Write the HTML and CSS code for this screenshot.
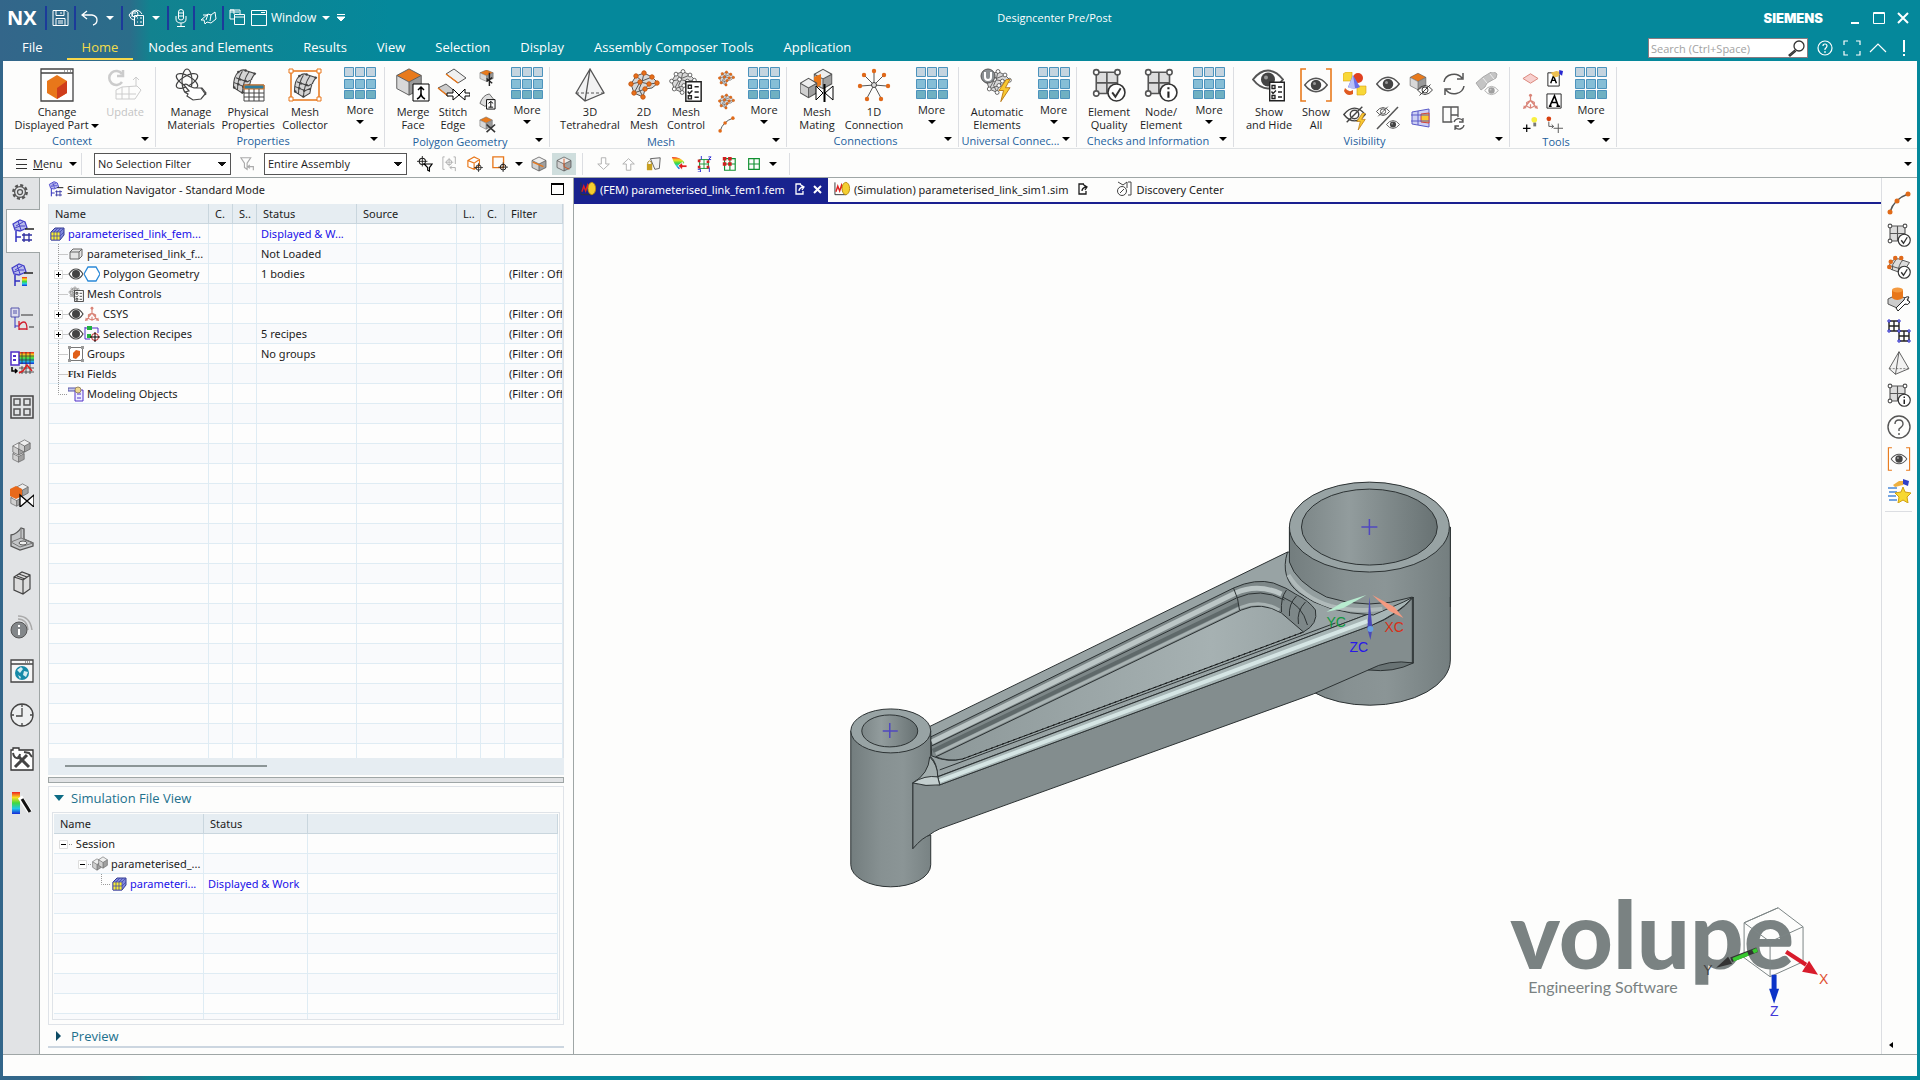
FILE: index.html
```
<!DOCTYPE html>
<html lang="en">
<head>
    <meta charset="utf-8">
    <title>Designcenter Pre/Post</title>
    <link rel="stylesheet" href="styles.css">
</head>
<body>
<svg class="sprite" aria-hidden="true">
    <defs>
        <linearGradient id="rainbow" x1="0" y1="0" x2="0" y2="1">
            <stop offset="0" stop-color="#f02020"/><stop offset=".25" stop-color="#f8e020"/><stop offset=".5" stop-color="#40d840"/><stop offset=".75" stop-color="#20c8e8"/><stop offset="1" stop-color="#1828d8"/>
        </linearGradient>
        <symbol id="down" viewBox="0 0 8 4"><path d="M0 0h8L4 4z" fill="currentColor"/></symbol>
        <symbol id="more" viewBox="0 0 32 32">
            <g stroke="#4c93bd"><path fill="#c4d4df" d="M.5.5h9v9h-9zM11.500.5h9v9h-9zM22.500.5h9v9h-9z"/><path fill="#86bed6" d="M.5 12.500h9v9h-9zM11.500 12.500h9v9h-9zM22.500 12.500h9v9h-9z"/><path fill="#6fb0c2" d="M.5 23.500h9v8h-9zM11.500 23.500h9v8h-9zM22.500 23.500h9v8h-9z"/></g>
        </symbol>
        <symbol id="eye" viewBox="0 0 32 24"><path d="M1 12Q8 3 16 3t15 9q-7 9-15 9T1 12z" fill="#fff" stroke="#555" stroke-width="2"/><circle cx="16" cy="12" r="7" fill="#444" stroke="none"/><circle cx="14" cy="10" r="2" fill="#999" stroke="none"/></symbol>
        <symbol id="tree-eye" viewBox="0 0 16 16"><path d="M1 8q3-5 7-5t7 5q-3 5-7 5T1 8z" fill="#fff" stroke="#444" stroke-width="1.200"/><circle cx="8" cy="8" r="4" fill="#444"/></symbol>
        <symbol id="slash-eye" viewBox="0 0 32 24"><path d="M1 12Q8 3 16 3t15 9q-7 9-15 9T1 12z" fill="none" stroke="#444" stroke-width="2"/><circle cx="16" cy="12" r="6" fill="none" stroke="#444" stroke-width="2"/><path d="M5 23L27 1" stroke="#444" stroke-width="2"/></symbol>
        <symbol id="bolt" viewBox="0 0 14 24"><path d="M9 0L1 12h5L3 24l10-15H8l5-9z" fill="#f8c830" stroke="#b87818"/></symbol>
        <symbol id="cube" viewBox="0 0 32 32" preserveAspectRatio="none"><path d="M2 9L16 2l14 7-14 7z" fill="#e87a1c"/><path d="M2 9v14l14 7V16z" fill="#d8d8d8"/><path d="M30 9v14l-14 7V16z" fill="#9a9a9a"/><path d="M2 9L16 2l14 7v14l-14 7-14-7zM2 9l14 7 14-7M16 16v14" fill="none" stroke="#555"/></symbol>
        <symbol id="cube-grey" viewBox="0 0 32 32" preserveAspectRatio="none"><path d="M2 9L16 2l14 7-14 7z" fill="#eee"/><path d="M2 9v14l14 7V16z" fill="#d0d0d0"/><path d="M30 9v14l-14 7V16z" fill="#a0a0a0"/><path d="M2 9L16 2l14 7v14l-14 7-14-7zM2 9l14 7 14-7M16 16v14" fill="none" stroke="#555" stroke-width="1.500"/></symbol>
        <symbol id="patch" viewBox="0 0 32 32">
            <path d="M9 5q5-4 9-2l12 4q-6 5-8 19l-8 5L3 24q0-14 6-19z" fill="#d4d4d4"/><path d="M9 5q5-4 9-2l12 4q-6 5-8 19l-8 5L3 24q0-14 6-19zM14 4q-6 9-6 23M22 5q-7 10-8 26M6 12l14 5 6-3M4 18l12 5 7-3" fill="none" stroke="#444" stroke-width="1.300"/>
            <g fill="#444" stroke="none"><circle cx="9" cy="5" r="1.500"/><circle cx="18" cy="3" r="1.500"/><circle cx="29" cy="7" r="1.500"/><circle cx="11" cy="14" r="1.500"/><circle cx="18" cy="16" r="1.500"/><circle cx="9" cy="20" r="1.500"/><circle cx="15" cy="23" r="1.500"/><circle cx="4" cy="24" r="1.500"/><circle cx="14" cy="30" r="1.500"/></g>
        </symbol>
        <symbol id="mesh" viewBox="0 0 32 32">
            <path d="M3 15l5-8 8-3 8 4 6 6-6 5-7 1-2 8-9-4z" fill="#d8d8d8" stroke="#555"/><path d="M3 15l9-2 9 2 9-1M8 7l6 5 10-4M16 4l-2 9-3 7 4 8M21 15l-4 5-11 4M12 13l-6 11" fill="none" stroke="#555"/>
            <g><circle cx="3" cy="15" r="2.200"/><circle cx="8" cy="7" r="2.200"/><circle cx="16" cy="4" r="2.200"/><circle cx="24" cy="8" r="2.200"/><circle cx="29" cy="14" r="2.200"/><circle cx="21" cy="15" r="2.200"/><circle cx="12" cy="13" r="2.200"/><circle cx="17" cy="20" r="2.200"/><circle cx="6" cy="24" r="2.200"/><circle cx="15" cy="28" r="2.200"/></g>
        </symbol>
        <symbol id="list" viewBox="0 0 16 20"><path d="M.7.7h14.600v18.600H.7z" fill="#fff" stroke="#222" stroke-width="1.400"/><path d="M3 4h3v3H3zM3 14h3v3H3zM2.500 10l1.500 2 3-3M9 5.500h4M9 10.500h4M9 15.500h4" fill="none" stroke="#222" stroke-width="1.300"/></symbol>
        <symbol id="grid4" viewBox="0 0 32 32">
            <path d="M4 4h20v20H4z" fill="#ddd" stroke="#555" stroke-width="1.500"/><path d="M14 4v20M4 14h20" stroke="#555" stroke-width="1.500"/>
            <g fill="#fff" stroke="#555" stroke-width="1.500"><circle cx="4" cy="4" r="2.500"/><circle cx="24" cy="4" r="2.500"/><circle cx="4" cy="24" r="2.500"/></g>
            <circle cx="23" cy="23" r="8" fill="#fff" stroke="#333" stroke-width="1.500"/>
        </symbol>
        <symbol id="quality" viewBox="0 0 32 32"><use href="#grid4"/><path d="M19 23l3 4 5-8" fill="none" stroke="#333" stroke-width="1.800"/></symbol>
        <symbol id="node-info" viewBox="0 0 32 32"><use href="#grid4"/><path d="M23 22v6M23 18v2" stroke="#222" stroke-width="2"/></symbol>
        <symbol id="tet" viewBox="0 0 32 34"><path d="M16 1L2 25l9 8 19-8zM16 1l-5 32" fill="#f2f2f2" stroke="#555" stroke-width="1.300"/><path d="M2 25h28" stroke="#555" stroke-dasharray="3 2"/></symbol>
        <symbol id="show-all" viewBox="0 0 32 34"><path d="M6 1H1v32h5M26 1h5v32h-5" fill="none" stroke="#e87a1c" stroke-width="1.600"/><use href="#eye" x="4" y="7" width="24" height="20"/></symbol>
        <symbol id="curve" viewBox="0 0 24 24"><path d="M3 21Q7 8 21 3" fill="none" stroke="#555" stroke-width="1.400"/><g fill="#e06a18"><circle cx="3" cy="21" r="2.500"/><circle cx="10" cy="10" r="2.500"/><circle cx="21" cy="3" r="2.500"/></g></symbol>
        <symbol id="csys" viewBox="0 0 18 18"><g fill="none" stroke="#d98478" stroke-width="1.300"><path d="M9 2v6L3 15M9 8l6 7M5 10l4-2 4 2v4l-4 2-4-2zM9 12v4"/></g><circle cx="9" cy="2.500" r="1.600" fill="#d98478"/><path d="M1 17l1-4 3 3zM17 17l-1-4-3 3z" fill="#d98478"/></symbol>
        <symbol id="fem" viewBox="0 0 16 16"><path d="M2 6l4-4h9v7l-4 5H2z" fill="#8088dc" stroke="#333a90"/><path d="M2 6h9v8H2z" fill="#f8ee30"/><path d="M2 6h9v8H2zM5 6v8M8 6v8M2 10h9M11 6l4-4M5 6l4-4M8 6l4-4M11 10l4-4" fill="none" stroke="#4448a8" stroke-width=".8"/></symbol>
        <symbol id="branch" viewBox="0 0 19 20"><path d="M9.500 0v20M9.500 10.500H19" fill="none" stroke="#999" stroke-dasharray="1 1"/></symbol>
        <symbol id="branch-end" viewBox="0 0 19 20"><path d="M9.500 0v10.500H19" fill="none" stroke="#999" stroke-dasharray="1 1"/></symbol>
        <symbol id="branch-plus" viewBox="0 0 19 20"><use href="#branch"/><path d="M5.500 6.500h8v8h-8z" fill="#fff" stroke="#ddd"/><path d="M7 10.500h5M9.500 8v5" stroke="#000"/></symbol>
        <symbol id="branch-minus" viewBox="0 0 19 20"><path d="M13 10.500h6" stroke="#999" stroke-dasharray="1 1"/><path d="M5.500 6.500h8v8h-8z" fill="#fff" stroke="#ddd"/><path d="M7 10.500h5" stroke="#000"/></symbol>
        <symbol id="page" viewBox="0 0 10 12"><path d="M6 1H1v10h7V8M5 1l3 3M4 8q0-3 4-4M6 2l3 2-2 3" fill="none" stroke="currentColor" stroke-width="1.300"/></symbol>
        <symbol id="sim" viewBox="0 0 18 16"><path d="M1 1v13h12" fill="none" stroke="#333"/><path d="M2 11l2-6 2 5 2-6 2 7" fill="none" stroke="#e02020" stroke-width="1.500"/><ellipse cx="12.500" cy="7.500" rx="4" ry="6.500" fill="#f4cf30" stroke="#b98a10"/></symbol>
        <symbol id="nav-mesh" viewBox="0 0 24 24"><path d="M2 5l7-4 5 2 2 6-7 3-5-1z" fill="#b9bcec" stroke="#4440c8" stroke-width="1.300"/><path d="M5 7l7-4M4 9q5-3 10-2M7 2l3 9" fill="none" stroke="#4440c8"/><path d="M14 10h9" stroke="#222" stroke-width="1.500"/><path d="M5 12v11M5 18h5" stroke="#3030c0" stroke-width="1.500" fill="none"/></symbol>
        <symbol id="target" viewBox="0 0 12 12"><circle cx="6" cy="6" r="3.500" fill="none" stroke="currentColor" stroke-width="1.200"/><path d="M6 0v12M0 6h12" stroke="currentColor"/></symbol>
    </defs>
</svg>

<header class="titlebar">
    <div class="quick">
        <span class="nx">NX</span><i class="vsep"></i>
        <button class="qa" aria-label="Save"><svg width="17" height="18" viewBox="0 0 17 18" fill="none" stroke="#fff"><path d="M1 1.500h13l2 2v13H1zM4 1.500v5h8v-5M9 3v2M4 16.500v-7h9v7M6 12h5M6 14h5"/></svg></button><i class="vsep"></i>
        <button class="qa" aria-label="Undo"><svg width="18" height="16" viewBox="0 0 18 16" fill="none" stroke="#fff" stroke-width="1.300"><path d="M6 1L1 5l5 4M1 5h10q5 1 5 5t-4 5"/></svg></button>
        <svg class="arrow"><use href="#down"/></svg><i class="vsep"></i>
        <button class="qa" aria-label="Reset"><svg width="17" height="18" viewBox="0 0 17 18" fill="none" stroke="#fff"><path d="M1 6q3-5 7-5t6 4M1 6q2 5 5 5M4 8V4h4M6.500 6.500h9v10h-9zM9 9h1M9 13h1M12 9h2M12 13h2"/><circle cx="7" cy="5" r="3"/></svg></button>
        <svg class="arrow"><use href="#down"/></svg><i class="vsep"></i>
        <button class="qa" aria-label="Voice"><svg width="14" height="18" viewBox="0 0 14 18" fill="none" stroke="#fff"><path d="M4.500 3q0-2.500 2.500-2.500T9.500 3v6q0 2-2.500 2T4.500 9zM2 7v3q0 4 5 4t5-4V7M7 14v3M3 17.500h8M5 4h4M5 7h4"/></svg></button><i class="vsep"></i>
        <button class="qa" aria-label="Touch"><svg width="17" height="14" viewBox="0 0 17 14" fill="none" stroke="#fff"><path d="M1 9l7-6 3 1 4-3 1 7-5 4-4-1-2 2-1-4zM8 3l-2 6M11 4l-1 6M3 4h4"/></svg></button><i class="vsep"></i>
        <button class="qa" aria-label="Cascade"><svg width="17" height="17" viewBox="0 0 17 17" fill="none" stroke="#fff"><path d="M5 5V1H1v9h4M1 1h10v4M1 3h9M5.500 5.500h10v10h-10zM5.500 8h10"/></svg></button>
        <button class="qa win"><svg width="16" height="16" viewBox="0 0 16 16" fill="none" stroke="#fff"><path d="M.5.5h15v15H.5zM.5 4.500h15M10 2.500h4"/></svg>Window<svg class="arrow"><use href="#down"/></svg></button>
        <svg width="8" height="8" viewBox="0 0 8 8"><path d="M0 .5h8M0 3h8L4 7z" fill="#fff" stroke="#fff"/></svg>
    </div>
    <h1>Designcenter Pre/Post</h1>
    <div class="winctl">
        <b>SIEMENS</b>
        <button aria-label="Minimize"><svg width="12" height="12" viewBox="0 0 12 12"><path d="M2 11h8" stroke="#fff" stroke-width="2"/></svg></button>
        <button aria-label="Maximize"><svg width="12" height="12" viewBox="0 0 12 12"><path d="M.5.5h11v11H.5zM.5 1.500h11" fill="none" stroke="#fff"/></svg></button>
        <button aria-label="Close"><svg width="12" height="12" viewBox="0 0 12 12"><path d="M1 1l10 10M11 1L1 11" stroke="#fff" stroke-width="2"/></svg></button>
    </div>
</header>

<nav class="menubar">
    <a class="file" href="#">File</a>
    <a class="active" href="#">Home</a>
    <a href="#">Nodes and Elements</a>
    <a href="#">Results</a>
    <a href="#">View</a>
    <a href="#">Selection</a>
    <a href="#">Display</a>
    <a href="#">Assembly Composer Tools</a>
    <a href="#">Application</a>
    <div class="search">
        <input type="text" placeholder="Search (Ctrl+Space)" aria-label="Search">
        <svg width="17" height="17" viewBox="0 0 17 17" fill="none" stroke="#333"><circle cx="11" cy="6" r="5" stroke-width="1.300"/><path d="M7 10l-6 5 1 1 6-5" stroke-width="1.300"/></svg>
    </div>
    <svg width="92" height="18" viewBox="0 0 92 18" fill="none" stroke="#fff" stroke-width="1.200">
        <circle cx="8" cy="9" r="7"/><path d="M6 7q0-2 2-2t2 2q0 1-2 3v1M8 12v2"/>
        <path d="M27 6V2h4M39 2h4v4M43 12v4h-4M31 16h-4v-4M53 13l8-8 8 8"/><path d="M87 1v12M87 15v2" stroke-width="2"/>
    </svg>
</nav>

<div class="shell">
<div class="ribbon">
    <section class="group g1">
        <div class="tools">
            <button class="big w100"><svg viewBox="0 0 34 34"><path d="M1 1h32v32H1zM1 5h32" fill="#fff" stroke="#444" stroke-width="1.300"/><path d="M24 3h7" stroke="#444" stroke-dasharray="1 2"/><path d="M17 7l10 6v12l-10 6-10-6V13z" fill="#e8771a"/><path d="M17 20l10-7v12l-10 6z" fill="#cf3d1c"/></svg><span>Change<br>Displayed Part <svg class="arrow"><use href="#down"/></svg></span></button>
            <button class="big w36" disabled><svg viewBox="0 0 34 34" fill="none" stroke="#ccc"><path d="M14 6a7 7 0 1 0 0 8M15 2v6h-6" stroke-width="2.500"/><path d="M8 22l6-3 15-1 4 4-6 9H8zM8 26h20M14 19v12M21 19v12M28 18V9l-3 3M28 9l3 3"/></svg><span>Update</span></button>
        </div>
        <h2>Context<svg class="arrow"><use href="#down"/></svg></h2>
    </section>
    <section class="group g2">
        <div class="tools">
            <button class="big w62"><svg viewBox="0 0 34 34" fill="none" stroke="#444" stroke-width="1.200"><ellipse cx="13" cy="13" rx="12" ry="5" transform="rotate(30 13 13)"/><ellipse cx="13" cy="13" rx="12" ry="5" transform="rotate(-30 13 13)"/><ellipse cx="13" cy="13" rx="5" ry="12"/><path d="M10 17q2-2 5 1l5 2 8 0 4 5-5 6-8 1-6-4 1-2-3-2 4-1z" fill="#fff"/><path d="M27 20l5 7"/></svg><span>Manage<br>Materials</span></button>
            <button class="big w52"><svg viewBox="0 0 34 34"><use href="#patch" width="26" height="26"/><path d="M13 17h20v16H13z" fill="#fff" stroke="#444"/><path d="M13 17h20v4H13z" fill="#2e7ea0" stroke="#e8771a"/><path d="M18 21v12M23 21v12M28 21v12M13 25h20M13 29h20" stroke="#444"/></svg><span>Physical<br>Properties</span></button>
            <button class="big w62"><svg viewBox="0 0 34 34"><path d="M3 3h28v29H3z" fill="none" stroke="#e8771a" stroke-width="1.500"/><path d="M1 1h4v4H1zM29 1h4v4h-4zM1 29h4v4H1zM29 29h4v4h-4z" fill="#fff" stroke="#e8771a"/><use href="#patch" x="4" y="3" width="26" height="28"/></svg><span>Mesh<br>Collector</span></button>
            <button class="more"><svg class="nine"><use href="#more"/></svg>More<svg class="arrow"><use href="#down"/></svg></button>
        </div>
        <h2>Properties<svg class="arrow"><use href="#down"/></svg></h2>
    </section>
    <section class="group g3">
        <div class="tools">
            <button class="big w48"><svg viewBox="0 0 34 34"><use href="#cube" x="-1" y="-1" width="28" height="30"/><path d="M17 16h16v17H17z" fill="#fff" stroke="#000"/><path d="M25 19v6q0 4-4 6M25 25q0 4 4 6M22 22l3-3 3 3" fill="none" stroke="#000" stroke-width="1.500"/></svg><span>Merge<br>Face</span></button>
            <button class="big w32"><svg viewBox="0 0 34 34"><path d="M10 6l8-5 12 9-8 5z" fill="#f0f0f0" stroke="#555"/><path d="M2 20l8-4 10 8-8 4z" fill="#ccc" stroke="#555"/><path d="M10 6l12 9M2 20l10 8" stroke="#e8771a" stroke-width="1.500"/><path d="M11 25h6v-4l6 6-6 5v-4h-6zM34 25h-5v-4l-6 6 6 5v-4h5z" fill="#fff" stroke="#000"/></svg><span>Stitch<br>Edge</span></button>
            <div class="smallcol w36">
                <button aria-label="Split Face"><svg viewBox="0 0 18 18"><use href="#cube" y="-1" width="16" height="14"/><path d="M11 3v14M8 12l6-4M8 9l6 5" stroke="#222" stroke-width="1.500"/></svg></button>
                <button aria-label="Heal"><svg viewBox="0 0 18 18"><path d="M1 11Q4 2 11 1l4 5v6l-9 2z" fill="#ddd" stroke="#666"/><path d="M8 7h9v10H8z" fill="#fff" stroke="#000"/><path d="M12.500 9v6M10 11l2.500-2 2.500 2M10 15h5" stroke="#000" fill="none"/></svg></button>
                <button aria-label="Remove Face"><svg viewBox="0 0 18 18"><use href="#cube" width="15" height="15"/><path d="M8 9l9 8M17 9l-9 8" stroke="#333" stroke-width="1.700"/></svg></button>
            </div>
            <button class="more"><svg class="nine"><use href="#more"/></svg>More<svg class="arrow"><use href="#down"/></svg></button>
        </div>
        <h2>Polygon Geometry<svg class="arrow"><use href="#down"/></svg></h2>
    </section>
    <section class="group g4">
        <div class="tools">
            <button class="big w72"><svg><use href="#tet"/></svg><span>3D<br>Tetrahedral</span></button>
            <button class="big w36"><svg class="odots" viewBox="0 0 34 34"><use href="#mesh" y="1" width="34" height="32"/></svg><span>2D<br>Mesh</span></button>
            <button class="big w48"><svg class="wdots" viewBox="0 0 34 34"><use href="#mesh" width="28" height="28"/><use href="#list" x="16" y="13" width="17" height="21"/></svg><span>Mesh<br>Control</span></button>
            <div class="smallcol w32">
                <button aria-label="3D Swept"><svg class="odots"><use href="#mesh"/></svg></button>
                <button aria-label="2D Mapped"><svg class="odots"><use href="#mesh"/></svg></button>
                <button aria-label="1D Mesh"><svg><use href="#curve"/></svg></button>
            </div>
            <button class="more"><svg class="nine"><use href="#more"/></svg>More<svg class="arrow"><use href="#down"/></svg></button>
        </div>
        <h2>Mesh<svg class="arrow"><use href="#down"/></svg></h2>
    </section>
    <section class="group g5">
        <div class="tools">
            <button class="big w52"><svg viewBox="0 0 34 34"><use href="#cube-grey" x="13" width="20" height="22"/><path d="M14 9l7-3v11l-7 4z" fill="#e8771a"/><use href="#cube-grey" x="-1" y="9" width="19" height="22"/><path d="M16 18l7 7-7 7zM33 18l-8 7 8 7z" fill="#fff" stroke="#000"/><path d="M24.500 16v18" stroke="#000" stroke-width="2"/></svg><span>Mesh<br>Mating</span></button>
            <button class="big w62"><svg viewBox="0 0 34 34"><path d="M17 17V3M17 17l10-10M17 17l13 1M17 17l7 13M17 17l-7 13M17 17L4 18M17 17L7 7" stroke="#555"/><g fill="#e0691a"><circle cx="17" cy="3" r="2.200"/><circle cx="27" cy="7" r="2.200"/><circle cx="31" cy="18" r="2.200"/><circle cx="24" cy="31" r="2.200"/><circle cx="10" cy="31" r="2.200"/><circle cx="3" cy="18" r="2.200"/><circle cx="7" cy="7" r="2.200"/></g><circle cx="17" cy="17" r="2.500" fill="#ddd" stroke="#444"/></svg><span>1D<br>Connection</span></button>
            <button class="more"><svg class="nine"><use href="#more"/></svg>More<svg class="arrow"><use href="#down"/></svg></button>
        </div>
        <h2>Connections<svg class="arrow"><use href="#down"/></svg></h2>
    </section>
    <section class="group g6">
        <div class="tools">
            <button class="big w68"><svg class="wdots" viewBox="0 0 34 34"><use href="#mesh" x="4" width="28" height="28"/><circle cx="8" cy="8" r="7" fill="#8a8f92"/><path d="M5 4v5q0 3 3 3t3-3V4" fill="none" stroke="#fff" stroke-width="2"/><use href="#bolt" x="18" y="11" width="13" height="23"/></svg><span>Automatic<br>Elements</span></button>
            <button class="more"><svg class="nine"><use href="#more"/></svg>More<svg class="arrow"><use href="#down"/></svg></button>
        </div>
        <h2>Universal Connec...<svg class="arrow"><use href="#down"/></svg></h2>
    </section>
    <section class="group g7">
        <div class="tools">
            <button class="big w56"><svg><use href="#quality"/></svg><span>Element<br>Quality</span></button>
            <button class="big w48"><svg><use href="#node-info"/></svg><span>Node/<br>Element</span></button>
            <button class="more"><svg class="nine"><use href="#more"/></svg>More<svg class="arrow"><use href="#down"/></svg></button>
        </div>
        <h2>Checks and Information<svg class="arrow"><use href="#down"/></svg></h2>
    </section>
    <section class="group g8">
        <div class="tools">
            <button class="big w62"><svg viewBox="0 0 34 34"><use href="#eye" y="-1" width="32" height="25"/><use href="#list" x="17" y="13" width="16" height="21"/></svg><span>Show<br>and Hide</span></button>
            <button class="big w32"><svg><use href="#show-all"/></svg><span>Show<br>All</span></button>
            <div class="vis">
                <button aria-label="Edit Display"><svg viewBox="0 0 24 24"><path d="M0 2l3-2h6v7l-2 2H0zM14 16l2-2h7v7l-2 2h-7z" fill="#f8d838" stroke="#d8a010" stroke-width=".6"/><circle cx="15" cy="6" r="5" fill="#e04020"/><path d="M10 3l7 12q-6 3-12 0z" fill="#6a70e8"/><path d="M10 3l2 13H5z" fill="#b8c0f8"/><path d="M2 16q4 5 8 2v4q-6 3-9-3z" fill="#e05a20"/></svg></button>
                <button aria-label="Show"><svg><use href="#eye"/></svg></button>
                <button aria-label="Hide Body"><svg viewBox="0 0 24 24"><use href="#cube" width="18" height="19"/><use href="#slash-eye" x="8" y="12" width="16" height="12"/></svg></button>
                <button aria-label="Invert"><svg viewBox="0 0 24 24" fill="none" stroke="#555" stroke-width="1.500"><path d="M2 10a10 9 0 0 1 18-4M22 14a10 9 0 0 1-18 4M21 1v6h-6M3 23v-6h6"/></svg></button>
                <button aria-label="Spotlight"><svg viewBox="0 0 24 24"><path d="M1 11l5 7 4-3 2-4 9-5 1-4-4-3-10 6z" fill="#c4c4c4" stroke="#aaa"/><path d="M15 2l4 5M8 6l4 5" stroke="#eee"/><use href="#eye" x="9" y="13" width="15" height="11" opacity=".5"/></svg></button>
                <button aria-label="Immediate Hide"><svg viewBox="0 0 24 24"><use href="#slash-eye" width="23" height="17"/><use href="#bolt" x="13" y="7" width="10" height="17"/></svg></button>
                <button aria-label="Toggle"><svg viewBox="0 0 24 24"><use href="#slash-eye" width="14" height="11"/><use href="#eye" x="10" y="13" width="14" height="11"/><path d="M1 23L22 1" stroke="#555" stroke-width="1.500"/></svg></button>
                <button aria-label="Section"><svg viewBox="0 0 24 24"><path d="M3 6l17-3v18L3 18z" fill="#cdd0f4" stroke="#5a5ac8"/><path d="M12 8l8-1v10l-8-1z" fill="#f8c830" stroke="#d04040"/><path d="M2 9h18M2 15h18M9 5v14" stroke="#5a5ac8"/></svg></button>
                <button aria-label="Layout"><svg viewBox="0 0 24 24" fill="none" stroke="#555" stroke-width="1.300"><path d="M1 1h15v15H1zM9 1v15M9 9h7"/><circle cx="17" cy="18" r="7" fill="#fff" stroke="none"/><path d="M12 16a5 5 0 0 1 9-1M22 19a5 5 0 0 1-9 2M21 12v4h-4M13 24v-4h4"/></svg></button>
            </div>
        </div>
        <h2>Visibility<svg class="arrow"><use href="#down"/></svg></h2>
    </section>
    <section class="group g9">
        <div class="tools">
            <div class="mini">
                <button aria-label="Datum Plane"><svg viewBox="0 0 18 18"><path d="M1 9l8-5 8 5-8 5z" fill="#f7d0ce" stroke="#d98478"/></svg></button>
                <button aria-label="Edit Note"><svg viewBox="0 0 18 18"><path d="M2 3h12v14H2z" fill="#fff" stroke="#222"/><path d="M5 14l3-8 3 8M6 11h4" fill="none" stroke="#000" stroke-width="1.500"/><path d="M5 3l6-2 5 1-3 5-4 1z" fill="#eec050"/><path d="M14 0l4 1-1 5-3-2z" fill="#2828d0"/></svg></button>
                <button aria-label="Datum CSYS"><svg><use href="#csys"/></svg></button>
                <button aria-label="Note"><svg viewBox="0 0 18 18"><path d="M1 1h15v15H1z" fill="#fff" stroke="#222"/><path d="M4 14l5-11 4 11M6 10h5M3 14h3M11 14h4" fill="none" stroke="#000" stroke-width="1.700"/></svg></button>
                <button aria-label="Point"><svg viewBox="0 0 18 18"><path d="M1 13h8M5 9v8" stroke="#000" stroke-width="1.300"/><circle cx="13" cy="4" r="3" fill="#f8f040"/><path d="M12 7h3v4h-3z" fill="#777"/></svg></button>
                <button aria-label="Offset Point"><svg viewBox="0 0 18 18"><circle cx="3" cy="3" r="2.500" fill="#d84010"/><path d="M3 6v5h5M6 9l2 2-2 2M8 13h10M13 8v10" fill="none" stroke="#555"/></svg></button>
            </div>
            <button class="more"><svg class="nine"><use href="#more"/></svg>More<svg class="arrow"><use href="#down"/></svg></button>
        </div>
        <h2>Tools<svg class="arrow"><use href="#down"/></svg></h2>
    </section>
    <svg class="arrow ribbon-end"><use href="#down"/></svg>
</div>

<div class="selbar">
    <button class="menu"><svg width="11" height="10" viewBox="0 0 11 10"><path d="M0 .5h11M0 5.500h11M0 9.500h11" stroke="#333"/></svg><span><u>M</u>enu</span><svg class="arrow"><use href="#down"/></svg></button>
    <i class="sep"></i>
    <select class="sel1" aria-label="Type filter"><option>No Selection Filter</option></select>
    <button class="sb" aria-label="Reset filters" disabled><svg viewBox="0 0 18 18" fill="none" stroke="#aaa" stroke-width="1.300"><path d="M1 2h11L8 8v7l-3-2V8zM9 12h6v4M11 10l-2 2 2 2"/></svg></button>
    <select class="sel2" aria-label="Scope"><option>Entire Assembly</option></select>
    <div class="icons">
        <button class="sb" aria-label="Filter"><svg viewBox="0 0 18 18"><use href="#target" width="12" height="12"/><path d="M8 9h9l-3 4v4l-2-1v-3z" fill="#fff" stroke="#000" stroke-width="1.300"/></svg></button>
        <button class="sb" aria-label="Undo selection" disabled><svg class="dim" viewBox="0 0 18 18"><use href="#target" x="3" y="2" width="10" height="10"/><path d="M3 1H1v14h2M13 1h2v8M9 13h6v4M11 11l-2 2 2 2" fill="none" stroke="#aaa"/></svg></button>
        <button class="sb" aria-label="Body select"><svg viewBox="0 0 18 18"><path d="M1 5l7-4 6 3v7l-6 4-7-3zM1 5l7 3 6-4M8 8v7" fill="#fff" stroke="#e8771a" stroke-width="1.300"/><use href="#target" x="8" y="8" width="10" height="10"/></svg></button>
        <button class="sb" aria-label="Rectangle select"><svg viewBox="0 0 18 18"><path d="M1 1h12v12H1z" fill="none" stroke="#e8771a" stroke-width="1.500"/><use href="#target" x="7" y="7" width="11" height="11"/></svg></button>
        <svg class="arrow"><use href="#down"/></svg>
        <button class="sb" aria-label="Wireframe"><svg viewBox="0 0 18 18"><use href="#cube-grey" width="18" height="18"/><path d="M2 7l12 5" stroke="#e8771a" stroke-width="1.500"/></svg></button>
        <button class="sb on" aria-label="Shaded"><svg viewBox="0 0 18 18"><use href="#cube-grey" width="18" height="18"/><path d="M9 3v9l6 3" fill="none" stroke="#d8501a"/></svg></button>
    </div>
    <i class="sep"></i>
    <div class="icons second">
        <button class="sb" aria-label="Down"><svg viewBox="0 0 18 18"><path d="M6 2h5v7h4l-6.500 6L2 9h4z" fill="#fff" stroke="#aaa"/></svg></button>
        <button class="sb" aria-label="Up"><svg viewBox="0 0 18 18"><path d="M6 16h5V9h4L8.500 3 2 9h4z" fill="#fff" stroke="#aaa"/></svg></button>
        <button class="sb" aria-label="Lock"><svg viewBox="0 0 18 18"><path d="M5 3l11-1-1 12-5 1z" fill="#f2f2f2" stroke="#555"/><path d="M1 9h6v7H1z" fill="#c8a020"/><path d="M2 9V7q2-3 4 0v2" fill="none" stroke="#a08020"/></svg></button>
        <button class="sb" aria-label="Results"><svg viewBox="0 0 18 18"><path d="M1 1q10 0 14 6l-6 8Q3 9 1 1z" fill="url(#rainbow)"/><path d="M8 11l5-4v3h5v3h-5v3z" fill="#e02020" stroke="#fff"/></svg></button>
        <button class="sb" aria-label="Labels"><svg viewBox="0 0 18 18"><path d="M4 4h10v10H4zM9 4v10M4 9h10" fill="none" stroke="#109030"/><path d="M2 4h3v3H2zM12 5h3v3h-3zM2 11h3v3H2zM12 11h3v3h-3z" fill="#d02020"/><path d="M6 0v4M14 1h3l-3 3h3M2 15h3v3H2M15 13v5" fill="none" stroke="#2020d0"/></svg></button>
        <button class="sb" aria-label="Nodes"><svg viewBox="0 0 18 18"><path d="M4 3h12v13H4zM10 3v13M4 9h12" fill="none" stroke="#109030" stroke-width="1.300"/><path d="M2 1h4v4H2zM8 1h4v4H8zM2 7h4v4H2zM8 7h4v4H8z" fill="#d02020"/></svg></button>
        <button class="sb" aria-label="Elements"><svg viewBox="0 0 18 18"><path d="M3 3h12v12H3zM9 3v12M3 9h12" fill="none" stroke="#109030" stroke-width="1.300"/></svg></button>
        <svg class="arrow"><use href="#down"/></svg>
    </div>
    <i class="sep"></i>
    <svg class="arrow ribbon-end"><use href="#down"/></svg>
</div>

<main class="work">
    <nav class="resbar">
        <button class="gear" aria-label="Settings"><svg viewBox="0 0 24 24" fill="none" stroke="#555"><circle cx="12" cy="12" r="8" stroke-width="3" stroke-dasharray="3.600 2.680"/><circle cx="12" cy="12" r="6.500" fill="#e1e3e5" stroke-width="1.500"/><circle cx="12" cy="12" r="3" stroke-width="1.500"/></svg></button>
        <button class="on" aria-label="Simulation Navigator"><svg viewBox="0 0 24 24"><use href="#nav-mesh" width="24" height="24"/><path d="M13 14v9M18 14v9M11 16h10M11 21h10" stroke="#3030a0" stroke-width="1.300"/></svg></button>
        <button aria-label="Post Navigator"><svg viewBox="0 0 24 24"><use href="#nav-mesh" width="24" height="24"/><path d="M12 14h5v9h-5z" fill="url(#rainbow)"/></svg></button>
        <button aria-label="XY Navigator"><svg viewBox="0 0 24 24" fill="none"><path d="M1 1h8v9H1zM3 4h4M3 6h4" fill="#dde" stroke="#55a"/><path d="M11 8h12M19 20h5" stroke="#333"/><path d="M5 10v11M5 19h4" stroke="#3030c0"/><path d="M9 23V14M9 19q2-4 5-4t3 8M9 22h8" stroke="#d02030" stroke-width="1.300"/></svg></button>
        <button aria-label="Graphs"><svg viewBox="0 0 24 24"><path d="M9 1h15v12H9z" fill="url(#rainbow)"/><path d="M1 1h8v13H1z" fill="#fff" stroke="#5030c8" stroke-width="1.500"/><path d="M3 4h3v2H3zM3 8h3v2H3z" fill="#5030c8"/><path d="M12 1v12M16 1v22M20 1v22M9 5h15M9 9h15M9 17h15M9 21h15M12 15v8" stroke="#333" stroke-width=".8"/><path d="M9 22l4-2 4-6 5 6" fill="none" stroke="#e02020" stroke-width="1.500"/><path d="M2 16v4h5M5 18l2 2-2 2" stroke="#000" fill="none" stroke-width="1.500"/></svg></button>
        <button aria-label="Views"><svg viewBox="0 0 24 24" fill="none" stroke="#555" stroke-width="1.500"><path d="M1 1h22v22H1z" stroke="#444"/><path d="M4 4h6v6H4zM14 4h6v6h-6zM4 14h6v6H4zM14 14h6v6h-6z"/></svg></button>
        <button aria-label="Assembly Navigator"><svg viewBox="0 0 24 24"><use href="#cube-grey" x="2" y="11" width="13" height="13"/><use href="#cube-grey" x="2" y="3" width="13" height="14"/><use href="#cube-grey" x="8" width="13" height="14"/></svg></button>
        <button aria-label="Constraint Navigator"><svg viewBox="0 0 24 24"><use href="#cube-grey" y="11" width="13" height="13"/><use href="#cube-grey" x="6" width="13" height="14"/><path d="M0 6l6-3 6 3v7l-6 3-6-3z" fill="#e8691a"/><path d="M10 12l7 6-7 6zM24 12l-7 6 7 6z" fill="#fff" stroke="#000" stroke-width="1.300"/></svg></button>
        <button aria-label="Part Navigator"><svg viewBox="0 0 24 24"><path d="M1 15V8q6-1 10-7l3 1v10l9 4v3l-13 4L1 19z" fill="#c4c6c8" stroke="#555" stroke-width="1.300"/><path d="M1 15l10-4 12 5M11 1v10M1 15l9 5 13-4" fill="none" stroke="#777"/><ellipse cx="13" cy="16" rx="4" ry="2" fill="#eee" stroke="#555"/></svg></button>
        <button aria-label="Reuse Library"><svg viewBox="0 0 24 24" fill="#ddd" stroke="#444" stroke-width="1.200"><path d="M4 6l8-5 8 3v14l-7 5-9-4zM4 6l9 3v14M13 9l7-5M7 5l8 3M9 3l8 3"/></svg></button>
        <button aria-label="HD3D Tools"><svg viewBox="0 0 24 24" fill="none"><path d="M8 4q9 0 10 11M8 1q12 0 14 14" stroke="#aaa" stroke-width="1.500"/><circle cx="9" cy="15" r="8" fill="#83878a" stroke="#555"/><path d="M9 14v6M9 10v2" stroke="#fff" stroke-width="2"/></svg></button>
        <button aria-label="Web Browser"><svg viewBox="0 0 24 24"><path d="M1 1h22v22H1zM1 5h22" fill="#f6f6f6" stroke="#444" stroke-width="1.300"/><path d="M15 3h6" stroke="#444" stroke-dasharray="1 1"/><circle cx="12" cy="14" r="7" fill="#168aa8"/><path d="M7 11l4-3 2 2-3 4zM14 12l4 1-2 5-3-2zM8 16l3 2-1 2z" fill="#d8eef2"/></svg></button>
        <button aria-label="History"><svg viewBox="0 0 24 24" fill="#eef0f1" stroke="#444" stroke-width="1.300"><circle cx="12" cy="12" r="11"/><path d="M12 5v8H6M12 1v3M12 20v3M1 12h3M20 12h3" fill="none"/></svg></button>
        <button aria-label="Process Studio"><svg viewBox="0 0 24 24"><path d="M1 3h2V1h6v2h14v20H1z" fill="#fff" stroke="#333" stroke-width="1.300"/><path d="M5 20L17 8M19 20L8 9" stroke="#444" stroke-width="3"/><path d="M3 6q1 6 6 5l1-4M14 5l5 1 3 4" fill="none" stroke="#444" stroke-width="2"/></svg></button>
        <button aria-label="Roles"><svg viewBox="0 0 24 24"><path d="M2 1h8v22H2z" fill="url(#rainbow)"/><path d="M10 6l10 15" stroke="#fff" stroke-width="5"/><path d="M12 8l8 13" stroke="#111" stroke-width="3"/></svg></button>
    </nav>

    <section class="panel">
        <h3 class="panel-title"><svg width="16" height="16" viewBox="0 0 24 24"><use href="#nav-mesh" width="24" height="24"/><path d="M13 14v9M18 14v9M11 16h10M11 21h10" stroke="#3030a0" stroke-width="1.300"/></svg>Simulation Navigator - Standard Mode
            <button aria-label="Maximize panel"></button></h3>
        <div class="treebox">
            <table class="grid">
                <colgroup><col class="c160"><col class="c24"><col class="c24"><col class="c100"><col class="c100"><col class="c24"><col class="c24"><col></colgroup>
                <thead><tr><th>Name</th><th>C.</th><th>S..</th><th>Status</th><th>Source</th><th>L..</th><th>C.</th><th>Filter</th></tr></thead>
                <tbody>
                <tr class="link"><td><div class="node root"><svg><use href="#fem"/></svg>parameterised_link_fem...</div></td><td></td><td></td><td>Displayed &amp; W...</td><td></td><td></td><td></td><td></td></tr>
                <tr><td><div class="node"><svg class="br"><use href="#branch"/></svg><svg viewBox="0 0 16 16"><path d="M2 6l3-3h9v7l-3 3H2zM2 6h9v7M11 6l3-3" fill="#e4e4e4" stroke="#666"/></svg>parameterised_link_f...</div></td><td></td><td></td><td>Not Loaded</td><td></td><td></td><td></td><td></td></tr>
                <tr><td><div class="node"><svg class="br"><use href="#branch-plus"/></svg><svg class="seen"><use href="#tree-eye"/></svg><svg viewBox="0 0 16 16"><path d="M4 1h8l4 7-4 7H4L0 8z" fill="#fff" stroke="#2888d8" stroke-width="1.300"/></svg>Polygon Geometry</div></td><td></td><td></td><td>1 bodies</td><td></td><td></td><td></td><td>(Filter : Off)</td></tr>
                <tr><td><div class="node"><svg class="br"><use href="#branch"/></svg><svg class="wdots" viewBox="0 0 16 16"><use href="#mesh" width="14" height="13"/><use href="#list" x="6" y="4" width="10" height="12"/></svg>Mesh Controls</div></td><td></td><td></td><td></td><td></td><td></td><td></td><td></td></tr>
                <tr><td><div class="node"><svg class="br"><use href="#branch-plus"/></svg><svg class="seen"><use href="#tree-eye"/></svg><svg><use href="#csys"/></svg>CSYS</div></td><td></td><td></td><td></td><td></td><td></td><td></td><td>(Filter : Off)</td></tr>
                <tr><td><div class="node"><svg class="br"><use href="#branch-plus"/></svg><svg class="seen"><use href="#tree-eye"/></svg><svg viewBox="0 0 16 16"><path d="M1 1v12h5M1 2h13v5" fill="none" stroke="#5030c8"/><path d="M3 0h5v4H3zM3 8h4v4H3z" fill="#20b040"/><circle cx="11" cy="11" r="3.500" fill="#fff" stroke="#c02020"/><path d="M11 6v10M6 11h10" stroke="#000"/></svg>Selection Recipes</div></td><td></td><td></td><td>5 recipes</td><td></td><td></td><td></td><td>(Filter : Off)</td></tr>
                <tr><td><div class="node"><svg class="br"><use href="#branch"/></svg><svg viewBox="0 0 16 16"><path d="M1.500 1.500h13v13h-13z" fill="#fff" stroke="#777"/><path d="M5 7l3-3 4 1v4l-4 4-3-1z" fill="#e0601a"/><path d="M0 0h3v3H0zM13 0h3v3h-3zM0 13h3v3H0zM13 13h3v3h-3z" fill="#999"/></svg>Groups</div></td><td></td><td></td><td>No groups</td><td></td><td></td><td></td><td>(Filter : Off)</td></tr>
                <tr><td><div class="node"><svg class="br"><use href="#branch"/></svg><b class="fx">F[x]</b>Fields</div></td><td></td><td></td><td></td><td></td><td></td><td></td><td>(Filter : Off)</td></tr>
                <tr><td><div class="node"><svg class="br"><use href="#branch-end"/></svg><svg viewBox="0 0 16 16"><path d="M0 2h8v3H0z" fill="#c8c8e8" stroke="#55a"/><path d="M7 4h8v11H7zM9 8h4M9 12h4" fill="#eef" stroke="#5030c8"/><circle cx="10" cy="4" r="3" fill="#f0d890" stroke="#986"/></svg>Modeling Objects</div></td><td></td><td></td><td></td><td></td><td></td><td></td><td>(Filter : Off)</td></tr>
                <tr><td></td><td></td><td></td><td></td><td></td><td></td><td></td><td></td></tr>
                <tr><td></td><td></td><td></td><td></td><td></td><td></td><td></td><td></td></tr>
                <tr><td></td><td></td><td></td><td></td><td></td><td></td><td></td><td></td></tr>
                <tr><td></td><td></td><td></td><td></td><td></td><td></td><td></td><td></td></tr>
                <tr><td></td><td></td><td></td><td></td><td></td><td></td><td></td><td></td></tr>
                <tr><td></td><td></td><td></td><td></td><td></td><td></td><td></td><td></td></tr>
                <tr><td></td><td></td><td></td><td></td><td></td><td></td><td></td><td></td></tr>
                <tr><td></td><td></td><td></td><td></td><td></td><td></td><td></td><td></td></tr>
                <tr><td></td><td></td><td></td><td></td><td></td><td></td><td></td><td></td></tr>
                <tr><td></td><td></td><td></td><td></td><td></td><td></td><td></td><td></td></tr>
                <tr><td></td><td></td><td></td><td></td><td></td><td></td><td></td><td></td></tr>
                <tr><td></td><td></td><td></td><td></td><td></td><td></td><td></td><td></td></tr>
                <tr><td></td><td></td><td></td><td></td><td></td><td></td><td></td><td></td></tr>
                <tr><td></td><td></td><td></td><td></td><td></td><td></td><td></td><td></td></tr>
                <tr><td></td><td></td><td></td><td></td><td></td><td></td><td></td><td></td></tr>
                <tr><td></td><td></td><td></td><td></td><td></td><td></td><td></td><td></td></tr>
                <tr><td></td><td></td><td></td><td></td><td></td><td></td><td></td><td></td></tr>
                <tr><td></td><td></td><td></td><td></td><td></td><td></td><td></td><td></td></tr>
                </tbody>
            </table>
        </div>
        <div class="hscroll"><i></i></div>
        <div class="splitter"></div>
        <div class="fileview">
            <h4><svg width="10" height="6" viewBox="0 0 10 6"><path d="M0 0h10L5 6z" fill="#0c6b84"/></svg>Simulation File View</h4>
            <div class="filebox">
                <table class="grid">
                    <colgroup><col class="c150"><col class="c104"><col></colgroup>
                    <thead><tr><th>Name</th><th>Status</th><th></th></tr></thead>
                    <tbody>
                    <tr><td><div class="node"><svg class="br"><use href="#branch-minus"/></svg><span>&nbsp;Session</span></div></td><td></td><td></td></tr>
                    <tr><td><div class="node lv1"><svg class="br"><use href="#branch-minus"/></svg><svg viewBox="0 0 16 16"><use href="#cube-grey" y="2" width="10" height="13"/><use href="#cube-grey" x="6" width="10" height="13"/></svg>parameterised_...</div></td><td></td><td></td></tr>
                    <tr class="link"><td><div class="node lv2"><svg class="br"><use href="#branch-end"/></svg><svg><use href="#fem"/></svg>parameteri...</div></td><td>Displayed &amp; Work</td><td></td></tr>
                    <tr><td></td><td></td><td></td></tr>
                    <tr><td></td><td></td><td></td></tr>
                    <tr><td></td><td></td><td></td></tr>
                    <tr><td></td><td></td><td></td></tr>
                    <tr><td></td><td></td><td></td></tr>
                    <tr><td></td><td></td><td></td></tr>
                    <tr><td></td><td></td><td></td></tr>
                    </tbody>
                </table>
            </div>
        </div>
        <h4 class="preview"><svg width="10" height="10" viewBox="0 0 10 10"><path d="M2 0v10l5-5z" fill="#0c4b64"/></svg>Preview</h4>
    </section>

    <section class="docs">
        <div class="doctabs">
            <a class="on" href="#"><svg width="17" height="16"><use href="#sim"/></svg>(FEM) parameterised_link_fem1.fem<svg class="pg"><use href="#page"/></svg><svg width="9" height="9" viewBox="0 0 9 9"><path d="M1 1l7 7M8 1L1 8" stroke="#fff" stroke-width="2"/></svg></a>
            <a href="#"><svg width="17" height="16"><use href="#sim"/></svg>(Simulation) parameterised_link_sim1.sim<svg class="pg"><use href="#page"/></svg></a>
            <a class="disc" href="#"><svg width="17" height="16" viewBox="0 0 17 16" fill="#fff" stroke="#444"><path d="M2 1l5 3 4-3v6M12 1h3v13h-3"/><circle cx="6" cy="10" r="4.500"/><path d="M4 12l4-4"/></svg>Discovery Center</a>
        </div>
        <svg class="scene" viewBox="574 204 1308 850">
            <defs>
                <linearGradient id="cyl"><stop offset="0" stop-color="#737d7e"/><stop offset=".35" stop-color="#879192"/><stop offset=".6" stop-color="#8b9596"/><stop offset="1" stop-color="#747e7f"/></linearGradient>
                <linearGradient id="bore"><stop offset="0" stop-color="#7d8788"/><stop offset=".35" stop-color="#929c9d"/><stop offset="1" stop-color="#687273"/></linearGradient>
                <linearGradient id="floor"><stop offset="0" stop-color="#8d9899"/><stop offset=".75" stop-color="#a6b1b2"/><stop offset="1" stop-color="#98a3a4"/></linearGradient>
            </defs>
            <g stroke="#2c3233" stroke-linejoin="round">
                <!-- large boss body -->
                <path d="M1290 527v133a80 45 0 0 0 161 0V527z" fill="url(#cyl)"/>
                <!-- arm: top surface, then front wall -->
                <path d="M927 728L1288 552Q1291 590 1330 606T1414 597L1361 617 940 776l-27 7z" fill="#98a3a4"/>
                <path d="M913 783q14 4 27 2L1373 625q26-10 41-28v66q-24 1-45 7L1314 694 940 829q-10 4-27 20z" fill="#838d8e"/>
                <path d="M1369 670q20-11 45-7-20 10-45 7z" fill="#697374"/>
                <path d="M938 777L1361 617q30-11 53-20-17 18-41 28L940 785z" fill="#a7b5b5"/>
                <path d="M940 781L1368 621" stroke="#d5e5e4" stroke-width="4"/>
                <path d="M940 770L1336 623" fill="none"/>
                <!-- pocket -->
                <path d="M931 737L1234 588q22-10 40-5 14 5 22 11 14 7 20 16 3 14-12 22L963 759q-15 4-31-3z" fill="#7d8788"/>
                <path d="M932 742L1236 593q22-10 46 1" fill="none" stroke="#bcc6c6" stroke-width="5"/>
                <path d="M932 746L1237 598q24-11 48 2" fill="none"/>
                <path d="M933 751L1239 604" fill="none" stroke="#5f696a" stroke-width="4"/>
                <path d="M936 757L1242 610q20-9 40 3l22 19L963 759q-14 3-27-2z" fill="url(#floor)"/>
                <path d="M936 754L1242 607q20-8 38 3" fill="none" stroke="#a9b3b3" stroke-width="3"/>
                <path d="M963 759L1304 632" fill="none" stroke="#111" stroke-dasharray="2 4"/>
                <path d="M1234 588q5 10 6 22M1287 590q-6 8-5 22M1297 596q-8 8-7 20M1306 602q-9 9-7 22" fill="none"/>
                <path d="M1283 597q20 8 25 28" fill="none"/>
                <!-- boss fillet and wall -->
                <path d="M1288 552q-8 26 12 41 26 20 74 22l30-13 10-5-60-37-64-8z" fill="#939e9f"/>
                <path d="M1289 575q13 22 42 31 22 6 52 3" fill="none" stroke="#b0baba" stroke-width="4"/>
                <path d="M1290 527v35q6 20 37 35 42 14 86 0h38v-70z" fill="url(#cyl)" stroke="none"/>
                <path d="M1290 527v35q6 20 37 35 42 14 86 0v66M1451 527v80" fill="none"/>
                <ellipse cx="1370" cy="527" rx="80" ry="45" fill="#98a3a4"/>
                <ellipse cx="1370" cy="527" rx="68" ry="38" fill="url(#bore)"/>
                <!-- small boss -->
                <path d="M851 731v134a40 22 0 0 0 80 0v-30q-8 2-18 14v-66l25-7q-1-14-7-19v-26z" fill="url(#cyl)"/>
                <path d="M930 757q8 8 8 20l-25 6q16-9 17-26z" fill="#a3aeae"/>
                <path d="M913 783q12-8 25-6l2 8q-14 2-27-2z" fill="#c3cece"/>
                <ellipse cx="891" cy="731" rx="40" ry="22" fill="#98a3a4"/>
                <ellipse cx="890" cy="731" rx="28" ry="16" fill="url(#bore)"/>
            </g>
            <path d="M883 731h15M890 723v15M1362 527h16M1370 519v16" stroke="#5048c0" stroke-width="1.500"/>
            <!-- WCS -->
            <path d="M1367 595l-25 8-15 9 17-4z" fill="#b8ecd0"/>
            <path d="M1373 595l22 12 9 11-14-7z" fill="#f49a80"/>
            <path d="M1370 597l3 32-2 11-3-11z" fill="#4a48b8"/><circle cx="1371" cy="629" r="3" fill="#68a0e0"/>
            <g class="axis"><text x="1327" y="627" fill="#109840">YC</text><text x="1385" y="632" fill="#d83018">XC</text><text x="1350" y="652" fill="#2818e8">ZC</text></g>
            <text class="brand" x="1511" y="969">volupe</text>
            <text class="tagline" x="1529" y="993">Engineering Software</text>
            <!-- view triad -->
            <path d="M1779 908l25 19v35l-33 15-26-19v-35zM1745 923l26 19 33-15M1745 923l34-15M1771 942v35" fill="none" stroke="#7c8686"/>
            <path d="M1758 950l-26 10" stroke="#333" stroke-width="5"/><path d="M1758 950l-4 2M1749 954l-15 6" stroke="#38c830" stroke-width="4"/><path d="M1717 968l12-11 4 7z" fill="#333"/>
            <path d="M1787 952l20 13" stroke="#d81c2c" stroke-width="4"/><path d="M1819 975l-16-3 7-11z" fill="#d81c2c"/>
            <path d="M1775 975v16" stroke="#0c34c8" stroke-width="5"/><path d="M1775 1004l-5-15h10z" fill="#0c34c8"/>
            <g class="axis"><text x="1704" y="975" fill="#444">Y</text><text x="1820" y="984" fill="#e05030">X</text><text x="1771" y="1016" fill="#4038d8">Z</text></g>
        </svg>
    </section>

    <nav class="sidebar">
        <button aria-label="1D Mesh"><svg><use href="#curve"/></svg></button>
        <button aria-label="Element Quality"><svg><use href="#quality"/></svg></button>
        <button aria-label="Check Mesh"><svg viewBox="0 0 32 32"><path d="M3 14q3-9 12-9l15 5q-5 6-8 15L5 19z" fill="#ddd" stroke="#555" stroke-width="1.300"/><path d="M3 14l20 6M12 6q-6 6-5 14M21 7q-6 6-6 16" fill="none" stroke="#555" stroke-width="1.300"/><g fill="#e0691a"><circle cx="3" cy="16" r="3"/><circle cx="5" cy="9" r="3"/><circle cx="11" cy="4" r="3"/><circle cx="19" cy="4" r="3"/></g><circle cx="23" cy="23" r="8" fill="#fff" stroke="#333" stroke-width="1.500"/><path d="M19 23l3 4 5-8" fill="none" stroke="#333" stroke-width="1.800"/></svg></button>
        <button aria-label="Edit Mesh Data"><svg viewBox="0 0 24 24"><path d="M1 12l6-3 14 2v5l-11 5-9-4z" fill="#ccc" stroke="#555"/><path d="M5 3v8q5 4 11 0V3z" fill="#e8771a"/><ellipse cx="10.500" cy="3" rx="5.500" ry="2.500" fill="#f49a40"/><path d="M9 21l8-8q1-4 5-3l-2 3 3 2q-2 4-5 2l-7 7z" fill="#fff" stroke="#222"/></svg></button>
        <button aria-label="Duplicate Nodes"><svg viewBox="0 0 24 24" fill="none" stroke="#222"><path d="M2 2h10v10H2zM7 2v10M2 7h10M12 12h10v10H12zM17 12v10M12 17h10" stroke-width="1.400"/><path d="M1 1h2v2H1zM11 1h2v2h-2zM1 11h2v2H1zM11 11h2v2h-2zM21 11h2v2h-2zM11 21h2v2h-2zM21 21h2v2h-2z" fill="#fff" stroke="#2828c8"/></svg></button>
        <button aria-label="3D Tetrahedral"><svg><use href="#tet"/></svg></button>
        <button aria-label="Node/Element Information"><svg><use href="#node-info"/></svg></button>
        <button aria-label="Help"><svg viewBox="0 0 24 24" fill="none" stroke="#555" stroke-width="1.400"><circle cx="12" cy="12" r="11"/><path d="M8 9q0-4 4-4t4 4q0 2-4 5v2M12 18v2"/></svg></button>
        <button aria-label="Show All"><svg><use href="#show-all"/></svg></button>
        <button aria-label="Favorites"><svg viewBox="0 0 24 24"><path d="M1 9h9M2 13h8M1 17h8M2 21h8" stroke="#4888d8" stroke-width="1.300"/><path d="M16 8l2 5 6 1-4 4 1 6-5-3-5 3 1-6-4-4 6-1z" fill="#f8d830" stroke="#d0a010"/><path d="M6 6l6-4 6 0-2 4-8 2z" fill="#eeb040"/><path d="M16 0l6 2-1 5-5-2z" fill="#3040c8"/></svg></button>
        <i class="rule"></i>
        <svg class="left" width="4" height="6" viewBox="0 0 4 6"><path d="M4 0v6L0 3z"/></svg>
    </nav>
</main>
<footer class="status"></footer>
</div>
</body>
</html>
```
FILE: styles.css
```
* {
    box-sizing: border-box;
}
body {
    margin: 0;
    height: 100vh;
    display: flex;
    flex-direction: column;
    overflow: hidden;
    font-family: "Open Sans", "Noto Sans", sans-serif;
    font-size: 11px;
    color: #1c1c1c;
    background: linear-gradient(90deg, #33668a 0, #2b6d8a 130px, #12828f 150px, #05889b 390px);
}
h1, h2, h3, h4 {
    margin: 0;
    font-weight: normal;
}
button {
    font: inherit;
    color: inherit;
    background: none;
    border: 0;
    padding: 0;
}
a {
    color: inherit;
    text-decoration: none;
}
svg {
    flex: none;
}
.sprite {
    position: absolute;
    width: 0;
    height: 0;
}
.arrow {
    width: 8px;
    height: 4px;
    vertical-align: middle;
    color: #000;
}
.odots {
    fill: #e8701a;
    stroke: #c85a14;
}
.wdots {
    fill: #fff;
    stroke: #555;
}
.dim {
    color: #aaa;
}

/* title bar */
.titlebar {
    display: flex;
    align-items: center;
    height: 35px;
    color: #fff;
}
.quick {
    display: flex;
    align-items: center;
    gap: 5px;
    padding-left: 7px;
}
.quick .arrow {
    margin: 0 2px;
    color: #fff;
}
.nx {
    font: bold 20px "Open Sans", sans-serif;
    width: 33px;
}
.vsep {
    width: 2px;
    height: 24px;
    background: #1c3a9a;
}
.qa {
    display: flex;
    align-items: center;
    gap: 4px;
}
.win {
    font-size: 12px;
}
.titlebar h1 {
    flex: 1;
    text-align: center;
    font-size: 11px;
}
.winctl {
    display: flex;
    align-items: center;
    gap: 12px;
    padding-right: 11px;
}
.winctl b {
    font: 900 13px Inter, sans-serif;
    margin-right: 14px;
}
.winctl svg {
    display: block;
}

/* menu tabs */
.menubar {
    display: flex;
    align-items: center;
    height: 26px;
    padding-right: 11px;
    color: #fff;
    font-size: 13px;
}
.menubar a {
    padding: 1px 15px 0;
    line-height: 21px;
    border-bottom: 2px solid transparent;
}
.menubar .file {
    padding: 1px 24px 0 22px;
}
.menubar .active {
    color: #f2dc4a;
    border-color: #f7d84c;
}
.search {
    display: flex;
    align-items: center;
    width: 160px;
    height: 20px;
    margin-left: auto;
    margin-right: 9px;
    padding: 0 2px 0 0;
    background: #fff;
    border: 1px solid #8a7a80;
}
.search input {
    flex: 1;
    min-width: 0;
    border: 0;
    padding: 0 2px;
    background: none;
    font: inherit;
    font-size: 11px;
}
.search input::placeholder {
    color: #a2a2a2;
}

.shell {
    flex: 1;
    min-height: 0;
    display: flex;
    flex-direction: column;
    margin: 0 3px 4px;
    background: #fdfdfc;
}

/* ribbon */
.ribbon {
    display: flex;
    height: 88px;
    padding-top: 6px;
    border-bottom: 1px solid #dfe2e4;
}
.group {
    display: flex;
    flex-direction: column;
    height: 80px;
    padding-left: 4px;
    border-right: 1px solid #dcdee2;
}
.g1 { width: 153px; }
.g2 { width: 229px; }
.g3 { width: 165px; }
.g4 { width: 237px; }
.g5 { width: 172px; }
.g6 { width: 118px; }
.g7 { width: 157px; }
.g8 { width: 276px; }
.g9 { width: 107px; }
.tools {
    display: flex;
    height: 69px;
}
.group h2 {
    display: flex;
    align-items: center;
    justify-content: center;
    height: 12px;
    margin-left: -4px;
    font-size: 11px;
    line-height: 12px;
    color: #235f9c;
    white-space: nowrap;
}
.group h2 .arrow {
    margin: 0 6px 5px auto;
}
.group h2::before {
    content: "";
    margin-right: auto;
}
.big, .more {
    display: flex;
    flex-direction: column;
    align-items: center;
    line-height: 13px;
    white-space: nowrap;
    text-align: center;
}
.big {
    padding-top: 1px;
    gap: 3px;
}
.big > svg {
    width: 34px;
    height: 34px;
}
.big:disabled {
    color: #c4c4c4;
}
.more {
    flex: 1;
    gap: 4px;
}
.nine {
    width: 32px;
    height: 32px;
}
.w32 { width: 32px; }
.w36 { width: 36px; }
.w48 { width: 48px; }
.w52 { width: 52px; }
.w56 { width: 56px; }
.w62 { width: 62px; }
.w68 { width: 68px; }
.w72 { width: 72px; }
.w100 { width: 100px; }
.smallcol, .mini {
    display: grid;
    grid-template-rows: repeat(3, 23px);
    justify-items: center;
}
.smallcol svg, .mini svg {
    display: block;
    width: 17px;
    height: 17px;
}
.mini {
    grid-template-columns: 24px 24px;
    margin-left: 4px;
}
.vis {
    display: grid;
    grid-template: repeat(2, 34px) / repeat(5, 33px);
    place-items: center;
    margin-left: 6px;
}
.vis svg {
    display: block;
    width: 24px;
    height: 24px;
}
.ribbon-end {
    margin-left: auto;
    margin-right: 5px;
    align-self: center;
}
.ribbon .ribbon-end {
    align-self: flex-end;
    margin-bottom: 6px;
}

/* selection bar */
.selbar {
    display: flex;
    align-items: center;
    height: 29px;
    padding-top: 1px;
    border-bottom: 1px solid #9fa6a6;
}
.menu {
    display: flex;
    align-items: center;
    gap: 6px;
    width: 78px;
    padding-left: 13px;
}
.sep {
    width: 1px;
    height: 22px;
    background: #dcdee2;
}
.selbar select {
    appearance: none;
    height: 22px;
    border: 1px solid #555;
    border-radius: 0;
    padding: 0 3px;
    font: inherit;
    color: inherit;
    background-color: #fff;
    background-image: linear-gradient(to bottom left, #111 50%, transparent 51%), linear-gradient(to bottom right, #111 50%, transparent 51%);
    background-size: 4px 4px;
    background-position: right 8px center, right 4px center;
    background-repeat: no-repeat;
}
.selbar .sel1 {
    width: 137px;
    margin-left: 12px;
}
.selbar .sel2 {
    width: 143px;
}
.sb {
    width: 24px;
    height: 22px;
}
.sb svg {
    display: block;
    width: 16px;
    height: 16px;
    margin: 0 auto;
}
.sel1 + .sb {
    width: 33px;
}
.sb.on {
    background: #cfdedd;
}
.icons {
    display: flex;
    align-items: center;
    gap: 1px;
    padding: 0 6px;
}
.icons .arrow {
    margin: 0 3px 0 2px;
}
.icons.second {
    padding: 0 9px;
}

/* work area */
.work {
    flex: 1;
    min-height: 0;
    display: flex;
    font-family: "Noto Sans", "Open Sans", sans-serif;
}
.resbar {
    display: flex;
    flex-direction: column;
    width: 37px;
    background: #e1e3e5;
    border-right: 1px solid #9fa6a6;
}
.resbar button {
    height: 44px;
    padding-left: 7px;
}
.resbar .gear {
    height: 28px;
    margin-bottom: 3px;
}
.resbar svg {
    display: block;
    width: 24px;
    height: 24px;
}
.resbar .gear svg {
    width: 20px;
    height: 20px;
}
.resbar .on {
    width: 34px;
    margin-left: 3px;
    padding-left: 4px;
    background: #fdfdfc;
    border: 1px solid #9fa6a6;
    border-right: 0;
}
.panel {
    display: flex;
    flex-direction: column;
    width: 534px;
    padding: 0 9px 6px 8px;
    border-right: 1px solid #9fa6a6;
}
.panel-title {
    display: flex;
    align-items: center;
    gap: 3px;
    height: 26px;
    padding-bottom: 4px;
    font-size: 11px;
}
.panel-title button {
    width: 13px;
    height: 12px;
    margin-left: auto;
    border: 1px solid #000;
    border-top-width: 2px;
}
.treebox {
    flex: 1;
    min-height: 0;
    overflow: hidden;
    border: 1px solid #dfe3e8;
    border-width: 0 1px;
}
.grid {
    width: 100%;
    table-layout: fixed;
    border-spacing: 0;
    background: #fdfdfd;
}
.grid th, .grid td {
    height: 20px;
    padding: 0 0 0 4px;
    border-right: 1px solid #dfecf4;
    border-bottom: 1px solid #dfecf4;
    line-height: 18px;
    text-align: left;
    white-space: nowrap;
    overflow: hidden;
}
.grid th {
    padding-left: 6px;
    font-weight: normal;
    background: #e6edf2;
    border-color: #c9d6de;
}
.grid td:first-child {
    padding-left: 0;
}
.grid tbody tr:nth-child(even) {
    background: #f9fafc;
}
.grid .link {
    color: #2010e8;
}
.c160 { width: 160px; }
.c150 { width: 150px; }
.c104 { width: 104px; }
.c100 { width: 100px; }
.c24 { width: 24px; }
.node {
    display: flex;
    align-items: center;
    height: 19px;
}
.node svg {
    width: 16px;
    height: 16px;
    margin-right: 3px;
}
.node .br {
    width: 19px;
    height: 20px;
    margin: 0;
}
.node .seen {
    margin-right: 0;
}
.fx {
    width: 19px;
    font: bold 9px "Liberation Serif", serif;
}
.lv1 {
    padding-left: 19px;
}
.lv2 {
    padding-left: 38px;
}
.hscroll {
    height: 17px;
    padding: 7px 17px;
    background: #e6edf2;
}
.hscroll i {
    display: block;
    width: 42%;
    height: 2px;
    background: #8b9596;
}
.splitter {
    height: 6px;
    margin: 2px 0 3px;
    background: #e1e3e5;
    border: 1px solid #9fa6a6;
}
.fileview {
    height: 239px;
    padding: 0 3px 4px;
    border: 1px solid #dfe3e8;
}
h4 {
    display: flex;
    align-items: center;
    gap: 7px;
    height: 25px;
    padding: 0 0 4px 2px;
    font-family: "Open Sans", sans-serif;
    font-size: 13px;
    color: #21708c;
}
.filebox {
    height: 208px;
    overflow: hidden;
    padding: 1px;
    border: 1px solid #dfe3e8;
}
.preview {
    height: 23px;
    padding: 0 0 0 6px;
    border-bottom: 2px solid #ccd6e0;
}
.docs {
    flex: 1;
    min-width: 0;
    display: flex;
    flex-direction: column;
}
.doctabs {
    display: flex;
    height: 26px;
    border-bottom: 2px solid #1a2090;
}
.doctabs a {
    display: flex;
    align-items: center;
    gap: 3px;
    height: 24px;
    padding: 0 6px 2px;
    font-size: 11px;
}
.doctabs .on {
    color: #fff;
    background: #18228e;
}
.doctabs .disc {
    margin-left: 11px;
}
.pg {
    width: 10px;
    height: 12px;
    margin: 0 5px 0 7px;
}
.scene {
    flex: 1;
    min-height: 0;
    width: 100%;
}
.axis {
    font: 14px "Liberation Sans", sans-serif;
}
.brand {
    font: 900 94px Lato, sans-serif;
    fill: #7a8282;
}
.tagline {
    font: 16px Lato, sans-serif;
    fill: #7a8282;
}
.sidebar {
    display: flex;
    flex-direction: column;
    align-items: center;
    gap: 8px;
    width: 36px;
    padding: 13px 2px 6px 0;
    border-left: 1px solid #dcdee2;
}
.sidebar button svg {
    display: block;
    width: 24px;
    height: 24px;
}
.rule {
    width: 27px;
    height: 1px;
    background: #dcdee2;
}
.left {
    margin: auto 15px 0 0;
}
.status {
    height: 22px;
    border-top: 1px solid #9fa6a6;
}
```
